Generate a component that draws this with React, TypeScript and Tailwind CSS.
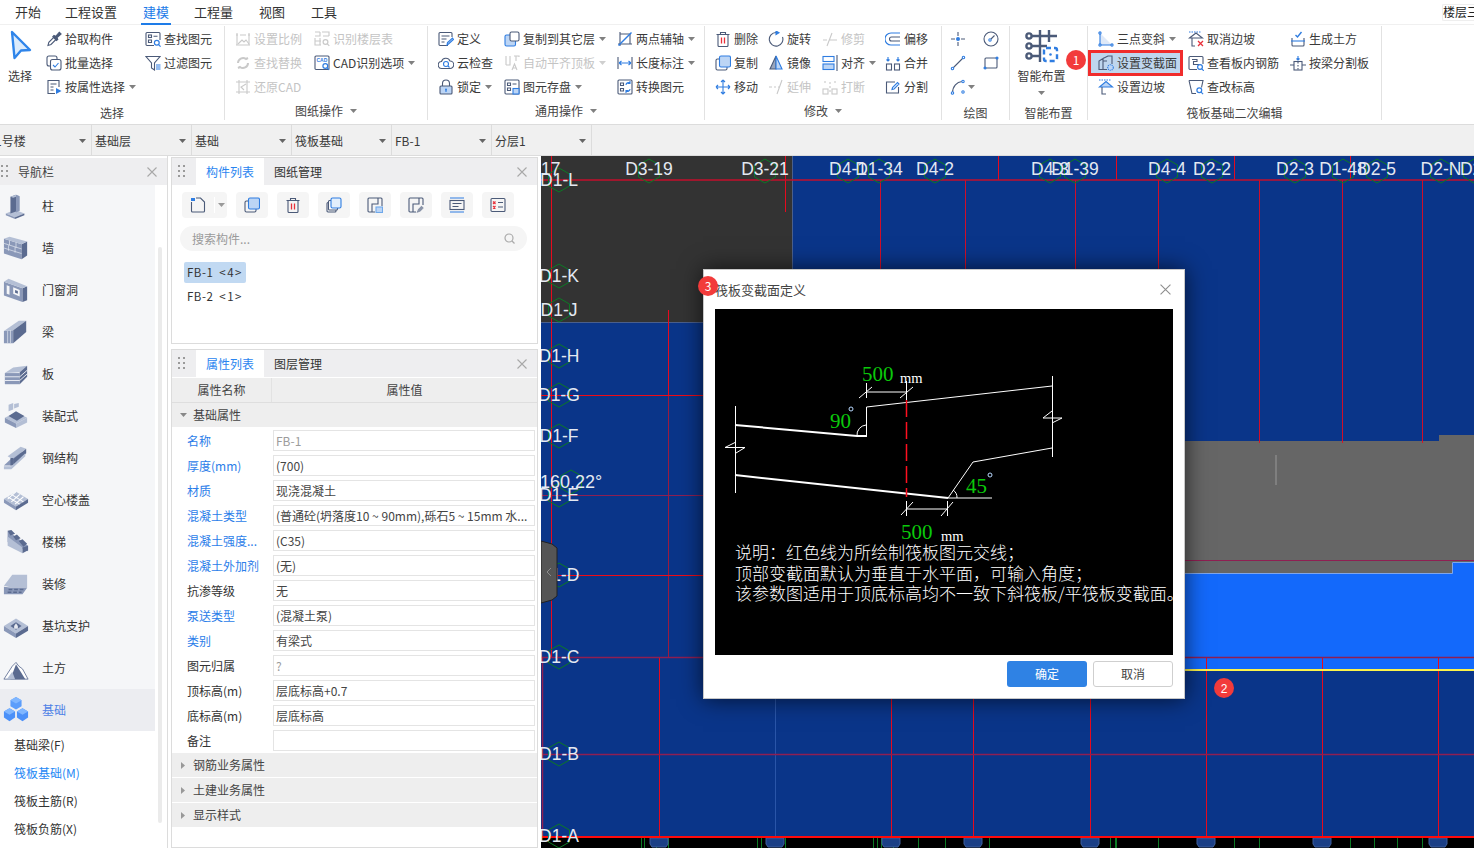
import React from 'react';

const D = '#4b5a78';
const B = '#2f7de1';
const L = '#bcd5f5';
const G = '#c9c9c9';
const R = '#e8303a';

function S({ c = D, w = 16, h = 16, children }: { c?: string; w?: number; h?: number; children?: React.ReactNode }) {
  return (
    <svg width={w} height={h} viewBox="0 0 16 16" fill="none" stroke={c} strokeWidth="1.1" className="shrink-0">
      {children}
    </svg>
  );
}

function Mag({ x = 11.5, y = 11.5, c = B }: { x?: number; y?: number; c?: string }) {
  return (
    <g stroke={c} strokeWidth="1.2">
      <circle cx={x} cy={y} r="2.4" fill="#fff" />
      <path d={`M${x + 1.8} ${y + 1.8}l2 2`} />
    </g>
  );
}

const icons: Record<string, React.ReactNode> = {
  pick: <S><path d="M2 14.5l.8-3.2 6-6 2.2 2.2-6 6z" /><path d="M8 4.5l1.5 1 3.8-4.3 1.8 1.8-4.3 3.800 1 1.500-1.300 1.200-3.700-3.800z" fill={D} /></S>,
  batch: <S><rect x="1" y="1" width="10" height="10" rx="2" /><rect x="4.500" y="4.500" width="10.500" height="10.500" rx="2" fill="#fff" /><path d="M7 10l2 2 3.500-4" stroke={B} /></S>,
  attr: <S><path d="M9 14.500H2v-13h11v6.500" /><path d="M4.500 5h6M4.500 8h3M4.500 11h3" /><path d="M10 9l5.500 3-5.500 3z" fill={B} stroke="none" /></S>,
  find: <S><path d="M9 14.500H2a1 1 0 0 1-1-1v-11a1 1 0 0 1 1-1h12a1 1 0 0 1 1 1V9" /><rect x="3.500" y="4" width="3" height="2.500" /><path d="M8.500 5.200h4M3.500 9h3v2.500h-3z" /><Mag x={11.800} y={11.800} /></S>,
  filter: <S><path d="M1 1.500h14l-5.500 6.500v7L6.500 13V8z" /><path d="M11 10h4.500M11 12h4.500M11 14h4.500" stroke={B} /></S>,
  scale: <S c={G}><path d="M1 4h2M5 4h6M13 4h2M2 2v12M14 2v12M1 14h14" /><path d="M3 13l4-4 2 2 2-2 3 4" /></S>,
  ident: <S c={G}><path d="M6 1v4H1M1 1h5M8 1h7v4M1 7v7h6M6 7v7M1 10h6M9 5h6" /><Mag x={11.500} y={11} c={G} /></S>,
  replace: <S c={G}><path d="M3 8a5 5 0 0 1 8-4l2-1M13 8a5 5 0 0 1-8 4l-2 1" strokeWidth="2" /></S>,
  restore: <S c={G}><path d="M4 1v14M12 1v14M1 3h14M1 13h14" /><path d="M11 5L6 8l3 3" /></S>,
  cad: <S><rect x="1" y="1" width="14" height="13.500" rx="1" /><text x="2.500" y="7" fontSize="5" fill={B} stroke="none" fontWeight="700" fontFamily="Liberation Sans">CAD</text><Mag x={11.300} y={11} /></S>,
  define: <S><path d="M10 14.500H2a1 1 0 0 1-1-1v-11a1 1 0 0 1 1-1h11a1 1 0 0 1 1 1V6" /><path d="M3.500 5h8M3.500 8h5M3.500 11h3" /><path d="M9 14l.5-2.500 5-4.500 1 1.500-5 4.500z" fill={L} stroke={B} /></S>,
  cloud: <S><path d="M4 13.500a3.500 3.500 0 0 1-.5-7A4.500 4.500 0 0 1 12 6a3.700 3.700 0 0 1 0 7.500z" /><circle cx="8" cy="9" r="2.500" stroke={B} /><path d="M10 11l1.500 1.500" stroke={B} /></S>,
  lock: <S><path d="M4.500 7V4.500a3.500 3.500 0 0 1 7 0V7" /><rect x="2" y="7" width="12" height="8" rx="1" fill={L} /><circle cx="8" cy="10.500" r="1" fill={B} stroke="none" /><path d="M8 11v2" stroke={B} /></S>,
  copyL: <S><rect x="1" y="4" width="10.500" height="11" rx="1.500" fill={L} stroke={B} /><rect x="6" y="1" width="9" height="9" rx="1.500" fill="#fff" /></S>,
  auto: <S c={G}><path d="M2 1v9M6 1v9h-4M10 1h5v1M12 1v5" /><path d="M8 15l2.500-6 2.500 6M9 13h3" /></S>,
  store: <S><rect x="1" y="1" width="14" height="14" rx="1" /><path d="M3.500 4h3v2.500h-3zM8.500 5h4M3.500 9h3v2.500h-3z" /><rect x="9" y="9.500" width="6" height="5.500" fill={L} stroke={B} /></S>,
  axis: <S><path d="M3 1v14M1 13h14M13 3v10M3 3h10" /><path d="M1.500 14.500L14.500 1.500" stroke={B} strokeWidth="1.400" /></S>,
  dim: <S><path d="M1 2v12M15 2v12" /><path d="M2 8h12M2 8l2.500-2M2 8l2.500 2M14 8l-2.500-2M14 8l-2.500 2" stroke={B} /></S>,
  conv: <S><rect x="1" y="1" width="14" height="14" rx="1" /><path d="M3.500 4h3v2.500h-3zM3.500 9.500h3V12h-3z" /><path d="M9 6a2.500 2.500 0 0 1 4-2M13 2v2.500h-2.500M13 10a2.500 2.500 0 0 1-4 2M9 14v-2.500h2.500" stroke={B} /></S>,
  del: <S><path d="M1.500 3.500h13M5.500 3.500V1.500h5v2M3 3.500v11a1 1 0 0 0 1 1h8a1 1 0 0 0 1-1v-11" /><path d="M6.500 6.500v6M9.500 6.500v6" stroke={R} strokeWidth="1.300" /></S>,
  rot: <S><path d="M8 1.500a6.800 6.800 0 1 0 6.500 4.500" /><path d="M8 0v3.500l3-1.700z" fill={B} stroke={B} /></S>,
  trim: <S c={G}><path d="M1 9h4M7 9h8M5 15L10 2" /></S>,
  offset: <S><path d="M15 2H6a6 6 0 0 0 0 12h9" stroke={B} /><path d="M15 6H6.500a2 2 0 0 0 0 4H15" /></S>,
  copy: <S><rect x="1" y="4" width="11" height="11" rx="1.500" /><rect x="4.500" y="1" width="11" height="11" rx="1.500" fill={L} stroke={B} /></S>,
  mirror: <S><path d="M8 1L2 14h6z" fill="#9aa6bd" /><path d="M8 1l6 13H8z" fill={L} stroke={B} /></S>,
  align: <S><rect x="1" y="1.500" width="11" height="5" stroke={B} /><rect x="1" y="9" width="11" height="5.500" fill={L} stroke={B} /><path d="M15 0v16" /></S>,
  merge: <S><rect x="1.500" y="9" width="5" height="6" /><rect x="9.500" y="9" width="5" height="6" /><path d="M3 2v4M3 6l-1.500-1.500M3 6l1.500-1.500M13 2v4M13 6l-1.500-1.500M13 6l1.500-1.500" stroke={B} /></S>,
  move: <S c={B}><path d="M8 1v14M1 8h14M8 1L6 3M8 1l2 2M8 15l-2-2M8 15l2-2M1 8l2-2M1 8l2 2M15 8l-2-2M15 8l-2 2" /></S>,
  ext: <S c={G}><path d="M1 8h3M6 8h2M10 8h2M9 15l5-14" /></S>,
  brk: <S c={G}><rect x="1" y="10" width="5" height="5" /><rect x="10" y="10" width="5" height="5" /><path d="M3 2v4M13 2v4M8 3v12" strokeDasharray="2 2" /></S>,
  split: <S><path d="M10 3H1.500v11h12V8" /><path d="M7 10.500l.5-2L12.500 3.500l1.500 1.500-5 5z" stroke={B} /></S>,
  point: <S><path d="M8 1v4M8 11v4M1 8h4M11 8h4" /><circle cx="8" cy="8" r="2" fill={B} stroke="none" /></S>,
  gauge: <S><circle cx="8" cy="8" r="7" /><circle cx="7" cy="9" r="1.200" stroke={B} /><path d="M8 8l3.500-3.500" /></S>,
  line: <S><path d="M3 13L13 3" /><circle cx="2.500" cy="13.500" r="1.200" stroke={B} fill="#fff" /><circle cx="13.500" cy="2.500" r="1.200" stroke={B} fill="#fff" /></S>,
  rect: <S><rect x="2" y="3" width="12" height="10" rx="1" /><circle cx="2" cy="13" r="1" fill={B} stroke={B} /><circle cx="14" cy="3" r="1" fill={B} stroke={B} /></S>,
  arc: <S><path d="M2.500 14C2.500 7 7 3 12 2.500" /><circle cx="2.500" cy="14" r="1.200" stroke={B} fill="#fff" /><circle cx="13" cy="2.500" r="1.200" stroke={B} fill="#fff" /><circle cx="13" cy="13" r="1.200" stroke={B} fill="#fff" /></S>,
  three: <S c={B}><path d="M2 2l12 12H2z" fill="#dfe9f8" stroke="none" /><path d="M2 2v12h12" /><circle cx="2" cy="2" r="1.100" fill="#fff" /><circle cx="2" cy="14" r="1.100" fill="#fff" /><circle cx="14" cy="14" r="1.100" fill="#fff" /></S>,
  section: <S><path d="M1 14.500V6l4-2.500V14.500zM5 3.500l5-2.500h4v8M1 14.500h8M5 6h4" /><circle cx="12.500" cy="12.500" r="2.800" fill={L} stroke={B} strokeDasharray="1.200 .8" /></S>,
  slope: <S><path d="M1 1h12" stroke={B} strokeDasharray="1.500 1" /><path d="M1.500 8L8 2.500 14.500 8z" fill={L} stroke={B} /><path d="M4 8v7h4" /></S>,
  cancel: <S><path d="M1 1h12" stroke={B} strokeDasharray="1.500 1" /><path d="M1.500 7L8 2l6.500 5zM4 7v8h3" /><path d="M10 10l5 5M15 10l-5 5" stroke={R} strokeWidth="1.300" /></S>,
  rebar: <S><path d="M9 14.500H2a1 1 0 0 1-1-1v-11a1 1 0 0 1 1-1h12a1 1 0 0 1 1 1V9" /><path d="M4 4.500h5v2H5.500v3h5v2" /><Mag x={12} y={12} /></S>,
  elev: <S><path d="M1 1.500h14l-1.500 7M1 1.500l3 13h4" /><Mag x={11.300} y={11.300} /></S>,
  earth: <S><path d="M2 7v7a1 1 0 0 0 1 1h10a1 1 0 0 0 1-1V7" /><path d="M1 10h14" stroke={B} /><path d="M5.500 4l2 2 4-5" stroke={B} strokeWidth="1.400" /></S>,
  bsplit: <S><path d="M8 1v4M8 5L6.500 3.500M8 5l1.500-1.500" stroke={B} /><rect x="4" y="6.500" width="8" height="8.500" /><path d="M8 7v8" strokeDasharray="1.500 1.500" /><path d="M0 10h4M12 10h4" /></S>,
};

function Caret({ c = '#808080' }: { c?: string }) {
  return (
    <svg width="7" height="4" viewBox="0 0 7 4" className="shrink-0">
      <path d="M0 0h7L3.500 4z" fill={c} />
    </svg>
  );
}

function Item({ i, t, caret, off }: { i: string; t: string; caret?: boolean; off?: boolean }) {
  return (
    <div className={`flex h-6 items-center gap-[3px] text-[12px] whitespace-nowrap ${off ? 'text-[#c4c4c4]' : 'text-[#3a3a3a]'}`}>
      {icons[i]}
      <span>{t}</span>
      {caret && <span className="ml-[1px]"><Caret c={off ? '#cfcfcf' : '#808080'} /></span>}
    </div>
  );
}

function Col({ w, children }: { w: string; children: React.ReactNode }) {
  return <div className={`flex shrink-0 flex-col ${w}`}>{children}</div>;
}

function Group({ w, label, caret, low, children }: { w: string; label: string; caret?: boolean; low?: boolean; children: React.ReactNode }) {
  return (
    <div className={`flex h-[94px] shrink-0 flex-col border-r border-[#e2e2e2] ${w}`}>
      <div className="flex h-[73px] pt-[1px]">{children}</div>
      <div className={`flex h-[21px] items-center justify-center gap-[7px] text-[12px] text-[#444] ${low ? 'pt-[6px]' : 'pt-[3px]'}`}>
        <span>{label}</span>
        {caret && <Caret />}
      </div>
    </div>
  );
}

function Ribbon() {
  return (
    <div className="flex h-[100px] border-t border-[#f0f0f0] bg-white pt-[1px]">
      <Group w="w-[225px]" label="选择" low>
        <Col w="w-[46px] items-center pr-[6px] pt-[3px]">
          <svg width="24" height="30" viewBox="0 0 24 30" className="ml-[2px]">
            <path d="M3 2l18 18-9 .5-6.500 7.500z" fill="#dcebfb" stroke="#2f85ea" strokeWidth="2.400" strokeLinejoin="round" />
          </svg>
          <span className="mt-[8px] text-[12px] leading-[16px] text-[#3a3a3a]">选择</span>
        </Col>
        <Col w="w-[99px]">
          <Item i="pick" t="拾取构件" />
          <Item i="batch" t="批量选择" />
          <Item i="attr" t="按属性选择" caret />
        </Col>
        <Col w="w-[78px]">
          <Item i="find" t="查找图元" />
          <Item i="filter" t="过滤图元" />
        </Col>
      </Group>
      <Group w="w-[203px]" label="图纸操作" caret>
        <div className="w-[10px]" />
        <Col w="w-[79px]">
          <Item i="scale" t="设置比例" off />
          <Item i="replace" t="查找替换" off />
          <Item i="restore" t="还原CAD" off />
        </Col>
        <Col w="w-[110px]">
          <Item i="ident" t="识别楼层表" off />
          <Item i="cad" t="CAD识别选项" caret />
        </Col>
      </Group>
      <Group w="w-[277px]" label="通用操作" caret>
        <div className="w-[10px]" />
        <Col w="w-[66px]">
          <Item i="define" t="定义" />
          <Item i="cloud" t="云检查" />
          <Item i="lock" t="锁定" caret />
        </Col>
        <Col w="w-[113px]">
          <Item i="copyL" t="复制到其它层" caret />
          <Item i="auto" t="自动平齐顶板" caret off />
          <Item i="store" t="图元存盘" caret />
        </Col>
        <Col w="w-[85px]">
          <Item i="axis" t="两点辅轴" caret />
          <Item i="dim" t="长度标注" caret />
          <Item i="conv" t="转换图元" />
        </Col>
      </Group>
      <Group w="w-[237px]" label="修改" caret>
        <div className="w-[10px]" />
        <Col w="w-[53px]">
          <Item i="del" t="删除" />
          <Item i="copy" t="复制" />
          <Item i="move" t="移动" />
        </Col>
        <Col w="w-[54px]">
          <Item i="rot" t="旋转" />
          <Item i="mirror" t="镜像" />
          <Item i="ext" t="延伸" off />
        </Col>
        <Col w="w-[63px]">
          <Item i="trim" t="修剪" off />
          <Item i="align" t="对齐" caret />
          <Item i="brk" t="打断" off />
        </Col>
        <Col w="w-[55px]">
          <Item i="offset" t="偏移" />
          <Item i="merge" t="合并" />
          <Item i="split" t="分割" />
        </Col>
      </Group>
      <Group w="w-[68px]" label="绘图" low>
        <div className="w-[8px]" />
        <Col w="w-[33px]">
          <div className="flex h-6 items-center">{icons.point}</div>
          <div className="flex h-6 items-center">{icons.line}</div>
          <div className="flex h-6 items-center gap-[2px]">{icons.arc}<Caret /></div>
        </Col>
        <Col w="w-[24px]">
          <div className="flex h-6 items-center">{icons.gauge}</div>
          <div className="flex h-6 items-center">{icons.rect}</div>
        </Col>
      </Group>
      <Group w="w-[78px]" label="智能布置" low>
        <Col w="w-full items-center pr-[14px] pt-[3px]">
          <svg width="34" height="34" viewBox="0 0 34 34" fill="none" stroke={D} strokeWidth="2.400">
            <path d="M6 6h26M6 16h16M6 26h8M15 0v32M24 0v12" />
            <circle cx="4" cy="6" r="2.600" fill="#fff" />
            <circle cx="4" cy="16" r="2.600" fill="#fff" />
            <circle cx="4" cy="26" r="2.600" fill="#fff" />
            <rect x="19" y="18" width="13" height="13" rx="2" fill="#fff" stroke={B} strokeDasharray="5 3" />
            <circle cx="25.500" cy="24.500" r="1.300" fill={B} stroke="none" />
          </svg>
          <span className="mt-[4px] whitespace-nowrap text-[12px] leading-[16px] text-[#3a3a3a]">智能布置</span>
          <span className="mt-[7px]"><Caret /></span>
        </Col>
      </Group>
      <Group w="w-[294px]" label="筏板基础二次编辑" low>
        <div className="w-[10px]" />
        <Col w="w-[90px]">
          <Item i="three" t="三点变斜" caret />
          <div className="relative">
            <div className="absolute left-[-10px] right-[5px] top-[-1px] bottom-[-1px] border-[3px] border-[#f02c2c] bg-[#bfd6ee]" />
            <div className="relative"><Item i="section" t="设置变截面" /></div>
          </div>
          <Item i="slope" t="设置边坡" />
        </Col>
        <Col w="w-[102px]">
          <Item i="cancel" t="取消边坡" />
          <Item i="rebar" t="查看板内钢筋" />
          <Item i="elev" t="查改标高" />
        </Col>
        <Col w="w-[85px]">
          <Item i="earth" t="生成土方" />
          <Item i="bsplit" t="按梁分割板" />
        </Col>
      </Group>
    </div>
  );
}

function Cell({ t, first }: { t: string; first?: boolean }) {
  return (
    <div className={`flex h-full items-center justify-between border-r border-[#dcdcdc] pr-[5px] pt-[1px] text-[12px] text-[#3a3a3a] ${first ? 'w-[92px] pl-0' : 'w-[100px] pl-[3px]'}`}>
      <span className={first ? 'ml-[-5px]' : ''}>{t}</span>
      <Caret c="#666" />
    </div>
  );
}

function Grip() {
  return (
    <svg width="7" height="14" viewBox="0 0 7 14" className="shrink-0" fill="#9a9a9a">
      {[0, 5].map((x) => [0, 5, 10].map((y) => <rect key={`${x}${y}`} x={x} y={y} width="2" height="2" />))}
    </svg>
  );
}

function Close({ c = '#a8a8a8', s = 10 }: { c?: string; s?: number }) {
  return (
    <svg width={s} height={s} viewBox="0 0 10 10" className="shrink-0" stroke={c} strokeWidth={s > 10 ? 1 : 1.100}>
      <path d="M.5.5l9 9M9.500.5l-9 9" />
    </svg>
  );
}

const P = { a: '#5b6b90', b: '#8a98b8', c: '#b4bfd5' };
const navIcons: React.ReactNode[] = [
  <g key="0"><path d="M3 22l10-4 10 4-10 4z" fill={P.c} /><path d="M3 22l10 4v2L3 24z" fill={P.b} /><path d="M23 22l-10 4v2l10-4z" fill={P.a} /><path d="M8 4l6-2v18l-6 2z" fill={P.a} /><path d="M8 4l6-2 3 1-6 2v0z" fill={P.c} /><path d="M14 2l4 1.500V19l-4 2z" fill={P.b} /></g>,
  <g key="1"><path d="M1 4l19 6v16L1 20z" fill={P.b} /><path d="M20 10l6-3v15l-6 4z" fill={P.a} /><path d="M1 4l6-2 19 5-6 3z" fill={P.c} /><path d="M1 9l19 6M1 14l19 6M7 6v5M14 8v6M6 11v6M13 13v6" stroke="#dfe4ee" strokeWidth=".8" fill="none" /></g>,
  <g key="2"><path d="M1 5l20 7v15L1 20z" fill={P.b} /><path d="M21 12l5-2v15l-5 2z" fill={P.a} /><path d="M1 5l5-3 20 8-5 2z" fill={P.c} /><path d="M4 9l3 1v9l-3-1z" fill="#f5f6f8" /><path d="M11 11l7 3v7l-7-3z" fill="#f5f6f8" /><path d="M13 14l3 1v3l-3-1z" fill={P.a} /></g>,
  <g key="3"><path d="M1 13l10-1v14H1z" fill={P.b} /><path d="M1 13L17 2h8L11 12z" fill={P.c} /><path d="M11 12L25 2v12L11 26z" fill={P.a} /><path d="M5 13v13M8 12v14" stroke="#dfe4ee" strokeWidth=".8" /></g>,
  <g key="4"><path d="M2 13l16-1 8-7-15 2z" fill={P.c} /><path d="M2 13h16v12H2z" fill={P.b} /><path d="M18 12l8-7v12l-8 8z" fill={P.a} /><path d="M2 17h16l8-7M2 21h16l8-7" stroke="#eef0f5" strokeWidth="1" fill="none" /></g>,
  <g key="5"><path d="M2 16l12-6 12 6-12 6z" fill={P.c} /><path d="M2 16l12 6v5L2 21z" fill={P.b} /><path d="M26 16l-12 6v5l12-6z" fill={P.c} /><path d="M6 14l8-5 9 5-8 5z" fill={P.a} /><path d="M6 2l5-2v7L6 9zM12 1l5-1v4l-5 2z" fill={P.c} /></g>,
  <g key="6"><path d="M1 22l8 0 15-14h-8z" fill={P.b} /><path d="M5 12l14-10 6 2L10 15z" fill={P.c} /><path d="M8 14h3v8H8z" fill={P.a} /><path d="M11 15L25 4v5L11 22z" fill={P.a} /><path d="M1 23h8l15-14v3L9 26H1z" fill={P.c} /></g>,
  <g key="7"><path d="M1 13L14 5l13 8-13 8z" fill={P.c} /><path d="M1 13l13 8v4L1 17z" fill={P.b} /><path d="M27 13l-13 8v4l13-8z" fill={P.a} /><path d="M5 10.500l13 8M9 8l13 8M14 5l-9 8M18 8l-9 8M22 10.500l-9 8" stroke="#fff" strokeWidth="1.100" fill="none" /></g>,
  <g key="8"><path d="M5 2l22 16v6L5 14z" fill={P.b} /><path d="M5 2l4-1 4 4-5 2zM11 8l4-2 4 4-5 2zM17 13l4-2 5 5-4 3z" fill={P.a} /><path d="M5 8v10l16 8v-6z" fill={P.c} /><path d="M21 26l6-3v-5l-6 2z" fill={P.a} /></g>,
  <g key="9"><path d="M1 16l9-12h16v14H10z" fill={P.c} /><path d="M1 17l9 1h16l-5 7H1z" fill={P.b} /><path d="M6 20h4M12 20h4M18 20h4M5 23h4M11 23h4M17 23h3" stroke={P.a} strokeWidth="1.600" /></g>,
  <g key="10"><path d="M1 14L14 6l13 8-13 8z" fill={P.c} /><path d="M1 14l13 8v5L1 19z" fill={P.b} /><path d="M27 14l-13 8v5l13-8z" fill={P.a} /><path d="M8 14l6-4 6 4-6 4z" fill={P.a} /><path d="M12 14l2-3 2 3v3h-4z" fill="#e6e9f0" /></g>,
  <g key="11"><path d="M1 26L10 12l4-4 3 4 4 3 6 11z" fill="#fff" stroke={P.a} strokeWidth=".9" /><path d="M8 26l6-16 5 8 5 8z" fill={P.a} /><path d="M4 26l6-8 3 8z" fill={P.c} /></g>,
  <g key="12"><path d="M14 0l6 3.500v6.500l-6 3.500-6-3.500V3.500z" fill="#5b9dfb" /><path d="M7 12l6 3.500V22l-6 4-6-4v-6.500z" fill="#4b90f8" /><path d="M21 12l6 3.500V22l-6 4-6-4v-6.500z" fill="#4b90f8" /><path d="M8 3.500l6 3.500 6-3.500-6-3.500zM1 15.500L7 19l6-3.500L7 12zM15 15.500l6 3.500 6-3.500-6-3.500z" fill="#7fb6ff" /></g>,
];

function Nav() {
  const rows = ['柱', '墙', '门窗洞', '梁', '板', '装配式', '钢结构', '空心楼盖', '楼梯', '装修', '基坑支护', '土方', '基础'];
  const subs = ['基础梁(F)', '筏板基础(M)', '筏板主筋(R)', '筏板负筋(X)'];
  return (
    <div className="relative h-full w-[168px] shrink-0 overflow-hidden border-r border-[#dcdcdc] bg-white pt-[2px]">
      <div className="flex h-[27px] items-center bg-[#eeeef0] pl-[1px] pr-[10px] text-[12px] text-[#444]">
        <Grip />
        <span className="ml-[10px]">导航栏</span>
        <span className="ml-auto"><Close /></span>
      </div>
      <div className="w-[155px] bg-[#f5f6f8]">
        {rows.map((r, i) => (
          <div key={r} className={`flex h-[42px] items-center pl-[3px] text-[12px] ${i === 12 ? 'bg-[#ecedf1] text-[#4f82e6]' : 'text-[#333]'}`}>
            <svg width="26" height="28" viewBox="0 0 28 28" className="shrink-0">{navIcons[i]}</svg>
            <span className="ml-[13px]">{r}</span>
          </div>
        ))}
      </div>
      {subs.map((s, i) => (
        <div key={s} className={`flex h-[28px] items-center pl-[14px] text-[12px] ${i === 1 ? 'text-[#1e88f5]' : 'text-[#333]'}`}>{s}</div>
      ))}
      <div className="absolute left-[158px] top-[91px] h-[576px] w-[4px] rounded bg-[#ebebeb]" />
    </div>
  );
}

function PanelHead({ a, b }: { a: string; b: string }) {
  return (
    <div className="flex h-[27px] shrink-0 items-center bg-[#eeeef0] pl-[6px] pr-[10px] text-[12px] text-[#333]">
      <Grip />
      <div className="ml-[11px] flex h-full w-[68px] items-center justify-center bg-white text-[#2a85f0]">{a}</div>
      <span className="ml-[10px]">{b}</span>
      <span className="ml-auto"><Close /></span>
    </div>
  );
}

function TB({ children }: { children: React.ReactNode }) {
  return <div className="flex h-[26px] w-[32px] items-center justify-center rounded bg-[#f5f5f5]">{children}</div>;
}

function List() {
  return (
    <div className="h-[187px] shrink-0 border border-[#dcdcdc] bg-white">
      <PanelHead a="构件列表" b="图纸管理" />
      <div className="ml-[10px] mt-[7px] flex gap-[9px]">
        <div className="flex h-[26px] w-[45px] items-center rounded bg-[#f5f5f5]">
          <div className="flex w-[33px] justify-center border-r border-white">
            <S><path d="M1.500 5v9a1 1 0 0 0 1 1h11a1 1 0 0 0 1-1V5l-4-4H6" /><path d="M1 1h4v3H1z" fill={B} stroke="none" /></S>
          </div>
          <div className="flex flex-1 justify-center"><Caret c="#999" /></div>
        </div>
        <TB>{icons.copy}</TB>
        <TB>{icons.del}</TB>
        <TB><S><rect x="1" y="5.500" width="9" height="9.500" rx="1" /><rect x="2.500" y="3.500" width="9" height="9.500" rx="1" fill="#fff" /><rect x="5" y="1" width="10" height="10" rx="1.500" fill="#e3effc" stroke={B} /></S></TB>
        <TB><S><path d="M8 15H2a1 1 0 0 1-1-1V2a1 1 0 0 1 1-1h12a1 1 0 0 1 1 1v7" /><path d="M5 15V7h6V1" /><rect x="9" y="10" width="6.500" height="5.500" fill={L} stroke="#6fa8ea" /></S></TB>
        <TB><S><path d="M8 15H2a1 1 0 0 1-1-1V2a1 1 0 0 1 1-1h12a1 1 0 0 1 1 1v6" /><path d="M5 15V7h6V1" /><path d="M9.500 15l1-2.500 3-3 1.500 1.500-3 3z" fill="#8a94a8" stroke="#8a94a8" /></S></TB>
        <TB><S><path d="M1 1h14M1 15h14" stroke={B} /><rect x="1" y="3.500" width="14" height="9" /><path d="M3.500 6.500h9M3.500 9.500h6" /></S></TB>
        <TB><S><rect x="1" y="1.500" width="14" height="13" rx="1" /><path d="M3 4.500l2.500 2.500M5.500 4.500L3 7M3 9l2.500 2.500M5.500 9L3 11.500" stroke={R} strokeWidth="1.200" /><path d="M8 5.500h5M8 10h5" /></S></TB>
      </div>
      <div className="ml-[8px] mr-[10px] mt-[8px] flex h-[25px] items-center justify-between rounded-full bg-[#f5f5f5] pl-[12px] pr-[12px] text-[12px] text-[#9a9a9a]">
        <span>搜索构件...</span>
        <svg width="11" height="11" viewBox="0 0 11 11" fill="none" stroke="#aaa" strokeWidth="1.200"><circle cx="5" cy="5" r="4" /><path d="M8 8l2.500 2.500" /></svg>
      </div>
      <div className="ml-[12px] mt-[11px] flex h-[21px] w-[62px] items-center gap-[6px] rounded-[2px] bg-[#c1d9f2] pl-[3px] text-[11.500px] text-[#333]">
        <span className="tracking-[.5px]">FB-1</span>
        <span className="tracking-[1.500px]">&lt;4&gt;</span>
      </div>
      <div className="ml-[15px] mt-[3px] flex h-[21px] items-center gap-[6px] text-[11.500px] text-[#333]">
        <span className="tracking-[.5px]">FB-2</span>
        <span className="tracking-[1.500px]">&lt;1&gt;</span>
      </div>
    </div>
  );
}

const props: [string, string, boolean, boolean?][] = [
  ['名称', 'FB-1', true, true],
  ['厚度(mm)', '(700)', true],
  ['材质', '现浇混凝土', true],
  ['混凝土类型', '(普通砼(坍落度10 ~ 90mm),砾石5 ~ 15mm 水...', true],
  ['混凝土强度...', '(C35)', true],
  ['混凝土外加剂', '(无)', true],
  ['抗渗等级', '无', false],
  ['泵送类型', '(混凝土泵)', true],
  ['类别', '有梁式', true],
  ['图元归属', '?', false, true],
  ['顶标高(m)', '层底标高+0.7', false],
  ['底标高(m)', '层底标高', false],
  ['备注', '', false],
];

function Sect({ t, open }: { t: string; open?: boolean }) {
  return (
    <div className="flex h-[24px] items-center bg-[#eeeeee] pl-[8px] text-[12px] text-[#444]">
      {open ? (
        <Caret c="#888" />
      ) : (
        <svg width="7" height="7" viewBox="0 0 7 7"><path d="M1 0l4 3.500-4 3.500z" fill="#999" /></svg>
      )}
      <span className="ml-[6px]">{t}</span>
    </div>
  );
}

function Props() {
  return (
    <div className="mt-[5px] min-h-0 flex-1 border border-[#dcdcdc] bg-white">
      <PanelHead a="属性列表" b="图层管理" />
      <div className="mt-[1px] flex h-[25px] items-center border-b border-[#dedede] bg-[#eeeeee] text-[12px] text-[#444]">
        <div className="flex h-full w-[100px] items-center justify-center border-r border-[#e2e2e2]">属性名称</div>
        <div className="flex-1 text-center">属性值</div>
      </div>
      <Sect t="基础属性" open />
      <div className="pt-[1px]">
        {props.map(([n, v, blue, grey]) => (
          <div key={n} className="flex h-[25px] items-center text-[12px]">
            <div className={`w-[101px] shrink-0 pl-[15px] whitespace-nowrap ${blue ? 'text-[#2b7de9]' : 'text-[#333]'}`}>{n}</div>
            <div className={`flex h-[21px] w-[262px] shrink-0 items-center overflow-hidden whitespace-nowrap border border-[#e4e4e4] pl-[2px] ${grey ? 'text-[#9c9c9c]' : 'text-[#444]'}`}>{v}</div>
          </div>
        ))}
      </div>
      <Sect t="钢筋业务属性" />
      <div className="h-[1px]" />
      <Sect t="土建业务属性" />
      <div className="h-[1px]" />
      <Sect t="显示样式" />
    </div>
  );
}

const red = '#e60a1e';
const dim = '#8f1f52';

function Hex({ x, y }: { x: number; y: number }) {
  const w = 10.500;
  const h = 12;
  return <polygon points={`${x},${y - h} ${x + w},${y - h / 2} ${x + w},${y + h / 2} ${x},${y + h} ${x - w},${y + h / 2} ${x - w},${y - h / 2}`} fill="none" stroke="#0c7a24" strokeWidth="1" />;
}

function Canvas() {
  const top: [string, number][] = [
    ['D3-19', 649], ['D3-21', 765], ['D4-1', 848], ['D1-34', 879], ['D4-2', 935], ['D4-3', 1050], ['D1-39', 1075],
    ['D4-4', 1167], ['D2-2', 1212], ['D2-3', 1295], ['D1-48', 1343], ['D2-5', 1377], ['D2-N', 1441], ['D2-', 1474],
  ];
  const left: [string, number][] = [
    ['D1-L', 180], ['D1-K', 276], ['D1-J', 310], ['D1-H', 356], ['D1-G', 395], ['D1-F', 436], ['D1-E', 495],
    ['D1-D', 575], ['D1-C', 657], ['D1-B', 754], ['D1-A', 836],
  ];
  const upper = [880, 965, 1075, 1158, 1259, 1342, 1422];
  const band = [998, 1116, 1234, 1350];
  const lower = [659, 891, 973, 1090, 1206, 1322, 1438];
  const tabs = [659, 775, 891, 973, 1090, 1206, 1322, 1438];
  const greens = [641, 644, 656, 668, 757, 761, 785, 873, 877, 881, 893, 918, 945, 989, 1110, 1115, 1116, 1158, 1234, 1259, 1350, 1374, 1397, 1422];
  return (
    <svg width="933" height="692" viewBox="541 156 933 692" className="absolute inset-0 block">
      <rect x="541" y="156" width="933" height="692" fill="#0a3589" />
      <rect x="541" y="156" width="251" height="166" fill="#333333" />
      <path d="M792.500 156v166.500H541" stroke="#4a5f8c" fill="none" />
      <path d="M1000 441H1439V435H1474V562H1452V573H1000z" fill="#666666" />
      <path d="M1000 574H1452V563H1474V669H1000z" fill="#1369fb" />
      <path d="M1000 573.500H1452.500V562.500H1474" stroke="#7fa6ea" fill="none" />
      <rect x="1275" y="455" width="2" height="30" fill="#7f7f7f" />
      <rect x="541" y="838" width="933" height="10" fill="#000" />
      {greens.map((x) => <path key={x} d={`M${x}.5 838v10`} stroke="#0c7a24" />)}
      {tabs.map((x) => (
        <path key={x} d={`M${x - 9} 838v6l2 3h14l2-3v-6z`} fill="#1b3f86" stroke="#3f5f9c" />
      ))}
      {band.map((x) => <path key={x} d={`M${x}.5 156v24`} stroke={red} />)}
      {upper.map((x) => <path key={x} d={`M${x}.5 180v263`} stroke={red} strokeOpacity=".9" />)}
      {lower.map((x) => <path key={x} d={`M${x}.5 657v180`} stroke={red} />)}
      <path d="M775.500 657v180" stroke="#2a55a8" />
      <path d="M785.500 156v56" stroke={red} />
      <path d="M541 180h933" stroke="#c40f2c" strokeWidth="1.500" />
      <path d="M551.500 156v501M668.500 310v85" stroke={red} />
      <path d="M668.500 395v262" stroke="#9a1b40" />
      <path d="M542.500 657v180" stroke={dim} strokeWidth="1.500" />
      <path d="M541 395.500h162M541 575.500h162" stroke="#f20a14" />
      <path d="M541 495.500h162M1000 560.500h474" stroke={dim} />
      <path d="M541 657.500h933M541 754.500h933" stroke={dim} strokeWidth="1.500" />
      <path d="M541 837h933" stroke="#ff0a0a" strokeWidth="2" />
      <path d="M1000 670h474" stroke="#fdf24a" strokeWidth="2" />
      {top.map(([t, x]) => <Hex key={t} x={x} y={171} />)}
      {left.map(([t, y]) => <Hex key={t} x={559} y={y} />)}
      <Hex x={571} y={482} />
      <g fill="#e4e9f2" fontFamily="Liberation Sans, sans-serif" fontSize="17.500">
        <text x="541" y="175">17</text>
        {top.map(([t, x]) => <text key={t} x={x} y={175} textAnchor="middle">{t}</text>)}
        {left.map(([t, y]) => <text key={t} x={559} y={y + 6} textAnchor="middle">{t}</text>)}
        <text x="540" y="488" fontSize="18">160.22°</text>
      </g>
      <path d="M541 541l11 3 5 4v48l-5 4-11 3z" fill="#555" stroke="#222" />
      <path d="M551 568l-4 4 4 4" stroke="#8c8c8c" fill="none" />
      <circle cx="1224" cy="688" r="10" fill="#f23b3b" />
      <text x="1224" y="692.500" textAnchor="middle" fontSize="12" fill="#fff" fontFamily="Liberation Sans, sans-serif">2</text>
    </svg>
  );
}

function Diagram() {
  const w = '#ffffff';
  return (
    <svg width="458" height="346" viewBox="715 309 458 346" className="block bg-black">
      <rect x="715" y="309" width="458" height="346" fill="#000" />
      <g fill="none" stroke={w} strokeWidth="1">
        <path d="M735.500 406v87" />
        <path d="M735 425L857 436H866.500" strokeWidth="2" />
        <path d="M866.500 437V407L1052 386" />
        <path d="M1052.500 376v81" />
        <path d="M725 447.500L736 442M725 447.500H745L736 453" />
        <path d="M1043 418L1052 411M1043 418H1062L1052 423" />
        <path d="M735 475L948 498" strokeWidth="2" />
        <path d="M948 498L973 462L1052 448" />
        <path d="M948 498H992" />
        <path d="M866.500 383V398M859 398L872 387M866 392H906.500M906.500 381V400M900 398L913 387" />
        <path d="M906.500 501V516M901 515L913 502M906 509H948M947.500 501V516M941 516L953 502" />
        <path d="M857 436A10 10 0 0 1 866 425" />
        <path d="M957 498A9 9 0 0 0 953 490" />
      </g>
      <path d="M906.500 400V497" stroke="#ff1020" strokeWidth="1.500" strokeDasharray="17 5" fill="none" />
      <g fill="#0bc90b" fontFamily="Liberation Serif, serif" fontSize="21">
        <text x="862" y="381">500</text>
        <text x="830" y="428">90</text>
        <text x="966" y="493">45</text>
        <text x="901" y="539">500</text>
      </g>
      <g fill="#fff" fontFamily="Liberation Serif, serif" fontSize="14.500">
        <text x="900" y="383">mm</text>
        <text x="941" y="541">mm</text>
      </g>
      <circle cx="851" cy="409" r="2" fill="none" stroke="#b8d8ff" />
      <circle cx="990" cy="475" r="2" fill="none" stroke="#b8d8ff" />
      <g fill="#fff" fontFamily="Noto Sans CJK SC, sans-serif" fontSize="17" fontWeight="300">
        <text x="735" y="559">说明：红色线为所绘制筏板图元交线；</text>
        <text x="735" y="580">顶部变截面默认为垂直于水平面，可输入角度；</text>
        <text x="735" y="600">该参数图适用于顶底标高均不一致下斜筏板/平筏板变截面。</text>
      </g>
    </svg>
  );
}

function Dialog() {
  return (
    <div className="absolute left-[162px] top-[113px] h-[430px] w-[482px] border border-[#c8c8c8] bg-white shadow-[0_0_22px_rgba(0,0,0,0.65)]">
      <div className="relative flex h-[39px] items-center justify-between pl-[11px] pr-[13px] text-[13px] text-[#444]">
        <span>筏板变截面定义</span>
        <Close c="#8e8e8e" s={11} />
        <span className="absolute left-[-6px] top-[6px] flex h-[20px] w-[20px] items-center justify-center rounded-full bg-[#f23b3b] text-[12px] text-white">3</span>
      </div>
      <div className="mx-[11px] h-[346px] w-[458px] overflow-hidden">
        <Diagram />
      </div>
      <div className="mt-[6px] mr-[11px] flex justify-end gap-[6px] text-[12px]">
        <div className="flex h-[26px] w-[80px] items-center justify-center rounded-[3px] bg-[#2f82e4] text-white">确定</div>
        <div className="flex h-[26px] w-[80px] items-center justify-center rounded-[3px] border border-[#cfcfcf] bg-white text-[#444]">取消</div>
      </div>
    </div>
  );
}

export default function App() {
  return (
    <div className="relative flex h-screen w-full flex-col overflow-hidden bg-white font-['Noto_Sans_CJK_SC','Liberation_Sans',sans-serif]">
      <div className="flex h-[24px] shrink-0 items-center pl-[15px] text-[13px] text-[#333]">
        <span>开始</span>
        <span className="ml-[24px]">工程设置</span>
        <span className="relative ml-[26px] text-[#1e7ce8]">
          建模
          <span className="absolute bottom-[-3px] left-[-2px] right-[-2px] h-[2px] bg-[#1e7ce8]" />
        </span>
        <span className="ml-[25px]">工程量</span>
        <span className="ml-[26px]">视图</span>
        <span className="ml-[26px]">工具</span>
        <div className="ml-auto flex h-[17px] w-[32px] items-center overflow-hidden whitespace-nowrap rounded-l-[2px] border border-r-0 border-[#eeeeee] text-[12px] text-[#222]">楼层三维</div>
      </div>
      <Ribbon />
      <div className="flex h-[32px] shrink-0 border-y border-[#dcdcdc] bg-[#f0f0f0]">
        <Cell t="1号楼" first />
        <Cell t="基础层" />
        <Cell t="基础" />
        <Cell t="筏板基础" />
        <Cell t="FB-1" />
        <Cell t="分层1" />
      </div>
      <div className="flex min-h-0 flex-1 bg-white">
        <Nav />
        <div className="ml-[3px] flex h-full w-[367px] shrink-0 flex-col pt-[1px]">
          <List />
          <Props />
        </div>
        <div className="relative ml-[3px] flex-1 overflow-hidden">
          <Canvas />
          <Dialog />
        </div>
      </div>
      <span className="absolute left-[1066px] top-[50px] flex h-[20px] w-[20px] items-center justify-center rounded-full bg-[#f23b3b] text-[12px] text-white">1</span>
    </div>
  );
}
